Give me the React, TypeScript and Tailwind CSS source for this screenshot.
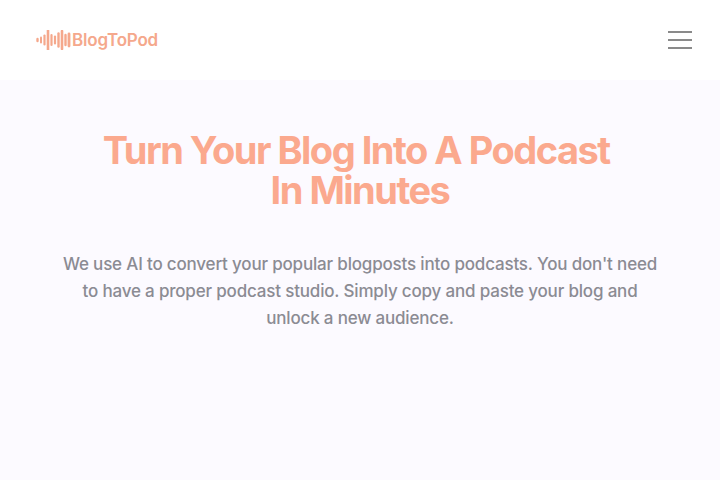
function Logo() {
  // wave form: [x, height, stroke width]
  const bars: [number, number, number][] = [
    [1.5, 2, 2.4], [5, 5, 2], [8.5, 9, 2.2], [12, 19, 2.6], [15.5, 10, 2.2], [19, 7, 2.2],
    [22.5, 13, 2.4], [26, 18, 2.6], [29.5, 10, 2.4], [33, 12, 2.8],
  ];
  return (
    <svg width="36" height="20" viewBox="0 0 36 20" fill="none" stroke="#f5a88c" strokeLinecap="round">
      {bars.map(([x, h, w]) => (
        <line key={x} x1={x} x2={x} y1={10 - h / 2} y2={10 + h / 2} strokeWidth={w} />
      ))}
    </svg>
  );
}

export default function App() {
  return (
    <div className="min-h-[480px] bg-[#fcfaff] font-['Inter',sans-serif]">
      {/* Header */}
      <header className="h-20 bg-white flex items-center justify-between pl-9 pr-7">
        <div className="flex items-center">
          <Logo />
          <span className="mt-0.5 text-[17px] font-semibold text-[#f5a88c] tracking-[-0.2px]">BlogToPod</span>
        </div>
        <button className="w-6 flex flex-col gap-1.5">
          <span className="h-0.5 bg-[#8a8a8a]" />
          <span className="h-0.5 bg-[#8a8a8a]" />
          <span className="h-0.5 bg-[#8a8a8a]" />
        </button>
      </header>

      {/* Hero */}
      <main className="flex flex-col items-center px-6 pt-[50px]">
        <h1 className="text-[38px] leading-10 font-bold tracking-[-1.5px] text-center text-[#fba98e]">
          Turn Your Blog Into A Podcast{'\u00a0'}
          <br />
          In Minutes
        </h1>
        <p className="mt-[41px] w-[610px] text-[17px] leading-[27px] font-medium tracking-[-0.18px] text-center text-[#8b8b93]">
          We use AI to convert your popular blogposts into podcasts. You don't need to have a proper podcast studio. Simply copy and paste your blog and unlock a new audience.
        </p>
      </main>
    </div>
  );
}
